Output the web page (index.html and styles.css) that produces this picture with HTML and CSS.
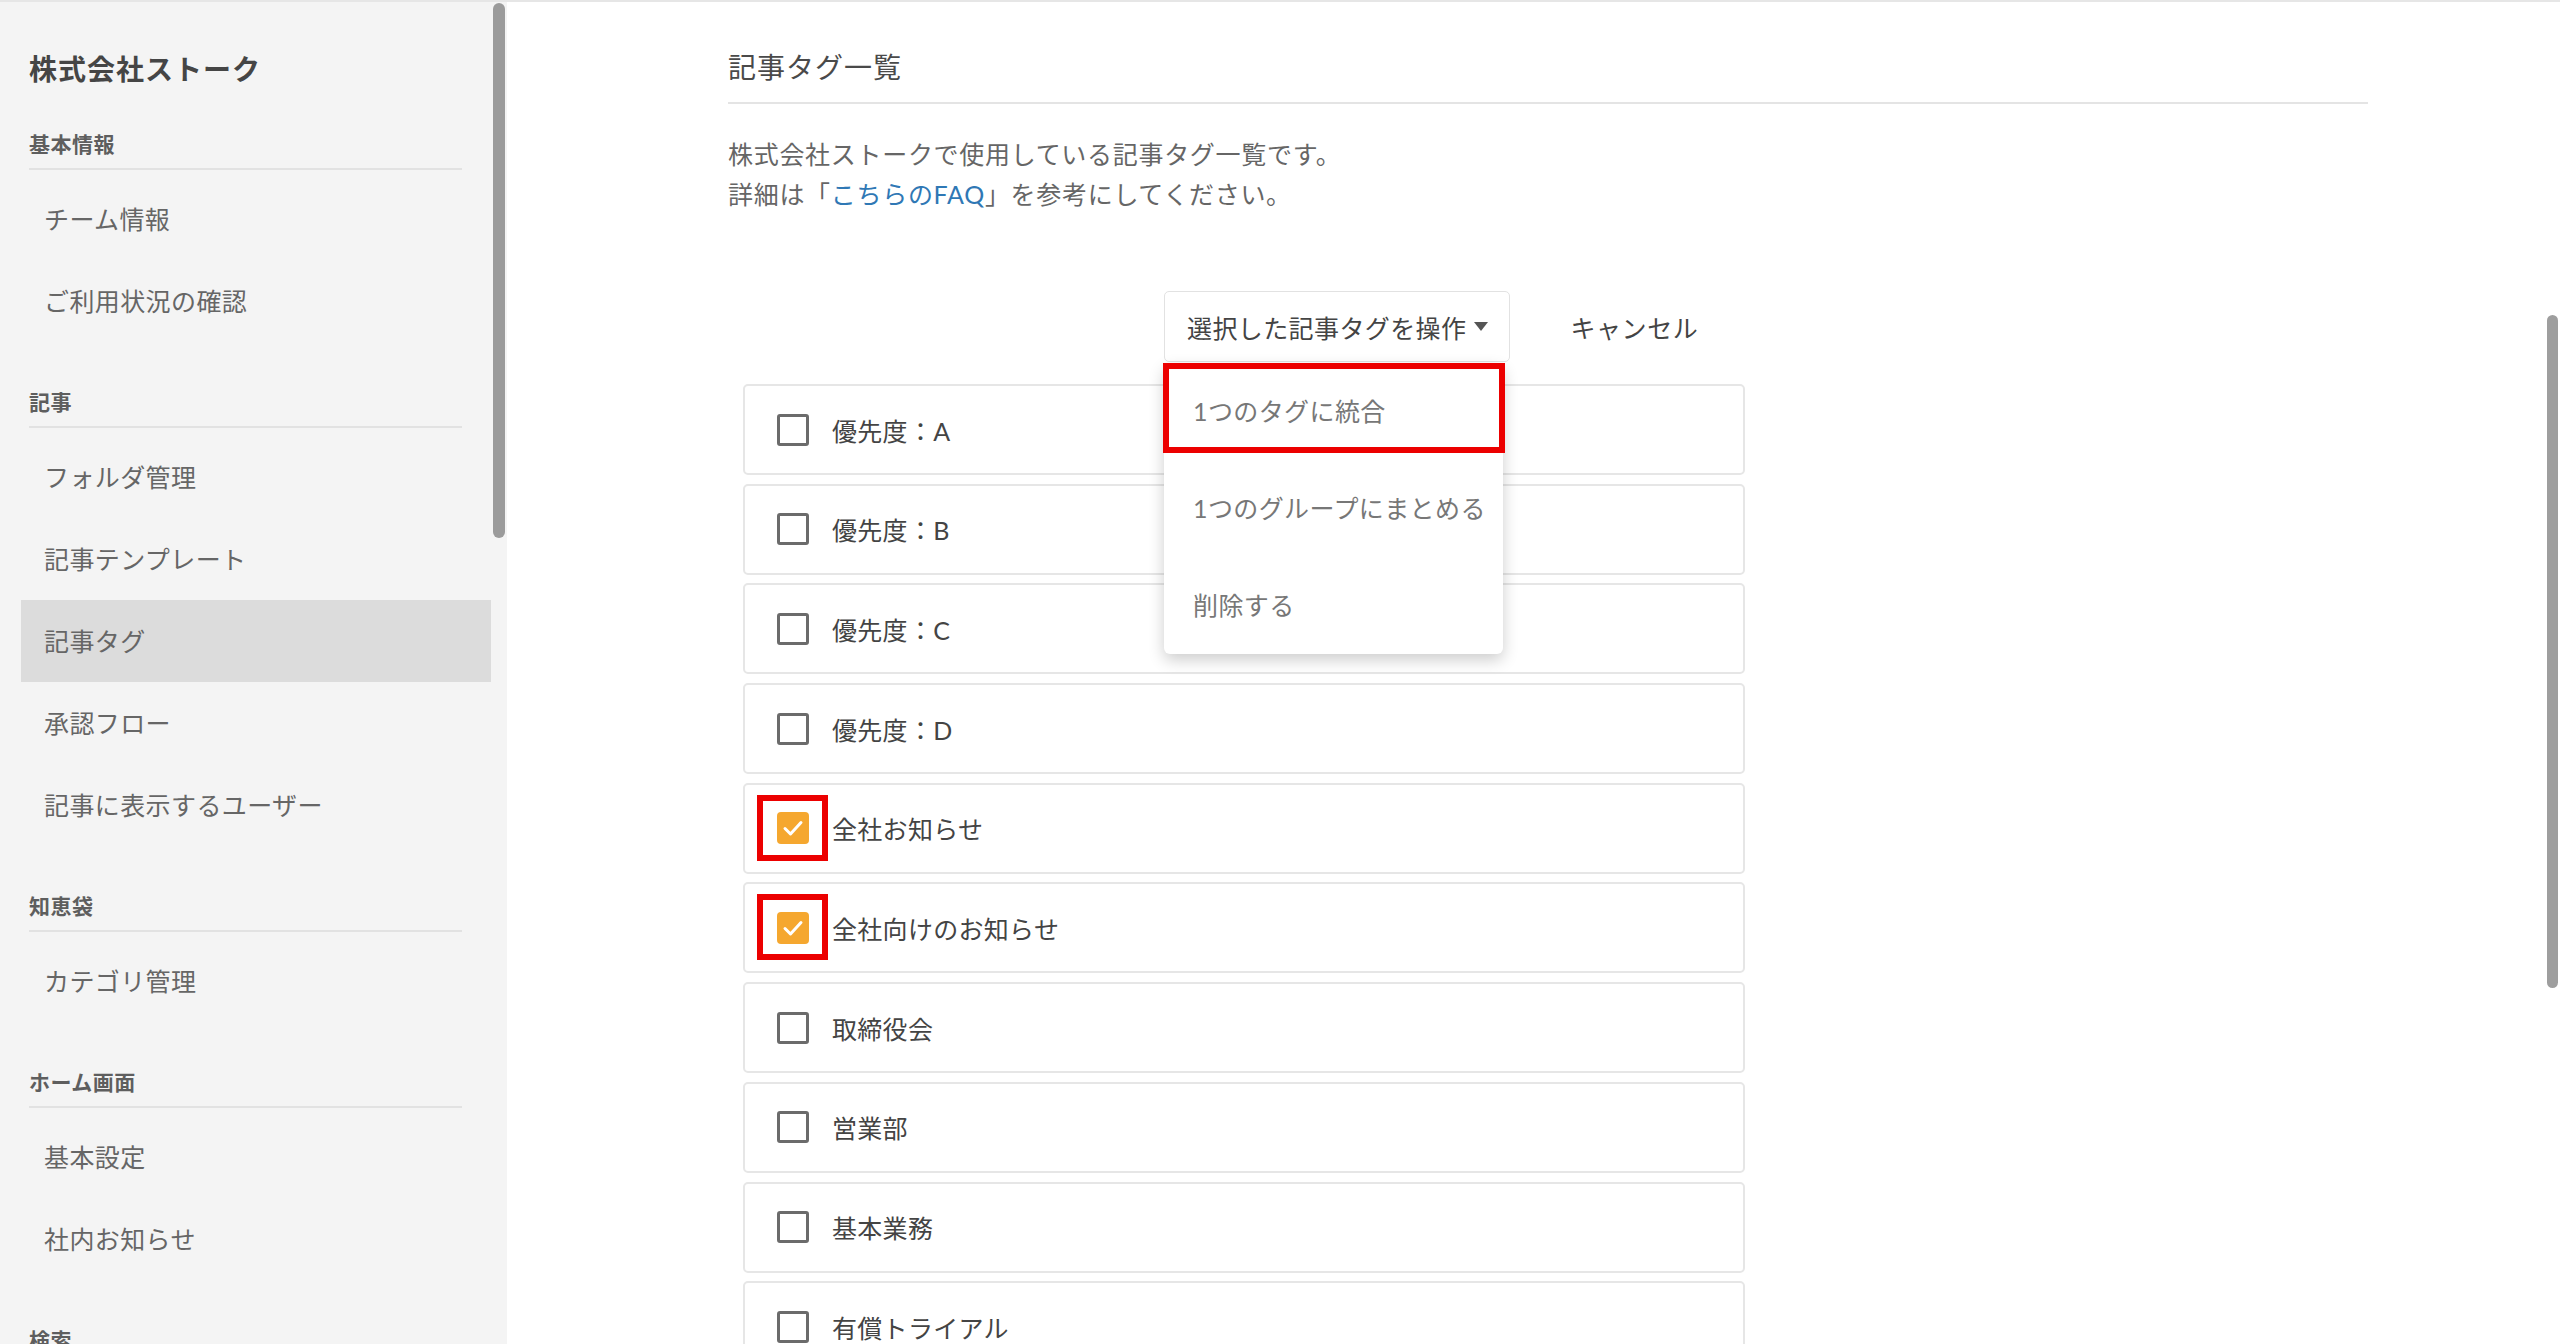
FILE: index.html
```html
<!DOCTYPE html>
<html lang="ja">
<head>
  <meta charset="UTF-8">
  <meta name="viewport" content="width=device-width, initial-scale=1.0">
  <title>記事タグ一覧</title>
  <link rel="stylesheet" href="styles.css">
</head>
<body>
  <div class="page">
    <aside class="sidebar">
      <div class="team-name">株式会社ストーク</div>

      <section class="nav-section">
        <h3 class="nav-heading">基本情報</h3>
        <a class="nav-item">チーム情報</a>
        <a class="nav-item">ご利用状況の確認</a>
      </section>

      <section class="nav-section">
        <h3 class="nav-heading">記事</h3>
        <a class="nav-item">フォルダ管理</a>
        <a class="nav-item">記事テンプレート</a>
        <a class="nav-item active">記事タグ</a>
        <a class="nav-item">承認フロー</a>
        <a class="nav-item">記事に表示するユーザー</a>
      </section>

      <section class="nav-section">
        <h3 class="nav-heading">知恵袋</h3>
        <a class="nav-item">カテゴリ管理</a>
      </section>

      <section class="nav-section">
        <h3 class="nav-heading">ホーム画面</h3>
        <a class="nav-item">基本設定</a>
        <a class="nav-item">社内お知らせ</a>
      </section>

      <section class="nav-section">
        <h3 class="nav-heading">検索</h3>
      </section>

      <div class="sidebar-thumb"></div>
    </aside>

    <main class="main">
      <div class="content">
        <h2 class="page-title">記事タグ一覧</h2>
        <p class="lead">
          株式会社ストークで使用している記事タグ一覧です。<br>
          詳細は「<a class="link" href="#">こちらのFAQ</a>」を参考にしてください。
        </p>

        <div class="toolbar">
          <div class="dropdown">
            <button class="btn-operate">選択した記事タグを操作<span class="caret"></span></button>
            <ul class="menu">
              <li class="menu-item">1つのタグに統合<span class="mark mark-menu"></span></li>
              <li class="menu-item">1つのグループにまとめる</li>
              <li class="menu-item">削除する</li>
            </ul>
          </div>
          <button class="btn-cancel">キャンセル</button>
        </div>

        <ul class="tag-list">
          <li class="tag-row"><span class="check"></span>優先度：A</li>
          <li class="tag-row"><span class="check"></span>優先度：B</li>
          <li class="tag-row"><span class="check"></span>優先度：C</li>
          <li class="tag-row"><span class="check"></span>優先度：D</li>
          <li class="tag-row">
            <span class="check checked">
              <svg viewBox="0 0 32 32" width="32" height="32"><polyline points="8,16.5 13.5,22 24,10.5" fill="none" stroke="#fff" stroke-width="3" stroke-linecap="round" stroke-linejoin="round"/></svg>
            </span>全社お知らせ
            <span class="mark mark-check"></span>
          </li>
          <li class="tag-row">
            <span class="check checked">
              <svg viewBox="0 0 32 32" width="32" height="32"><polyline points="8,16.5 13.5,22 24,10.5" fill="none" stroke="#fff" stroke-width="3" stroke-linecap="round" stroke-linejoin="round"/></svg>
            </span>全社向けのお知らせ
            <span class="mark mark-check"></span>
          </li>
          <li class="tag-row"><span class="check"></span>取締役会</li>
          <li class="tag-row"><span class="check"></span>営業部</li>
          <li class="tag-row"><span class="check"></span>基本業務</li>
          <li class="tag-row"><span class="check"></span>有償トライアル</li>
        </ul>
      </div>
    </main>

    <div class="page-thumb"></div>
  </div>
</body>
</html>
```

FILE: styles.css
```css
html, body {
  margin: 0;
  padding: 0;
  height: 100%;
  overflow: hidden;
}
body {
  font-family: 'Lato', 'Noto Sans CJK JP', sans-serif;
  background-color: #fff;
  color: #444;
}
.page {
  display: flex;
  height: 100vh;
  box-sizing: border-box;
  border-top: 2px solid #e6e6e6;
  overflow: hidden;
}

/* sidebar */
.sidebar {
  position: relative;
  flex: 0 0 507px;
  background-color: #f4f4f4;
  padding-top: 47px;
  box-sizing: border-box;
  overflow: hidden;
}
.team-name {
  margin: 0 0 40px 29px;
  font-size: 28px;
  line-height: 40px;
  font-weight: 700;
  letter-spacing: 1px;
  color: #454545;
}
.nav-section + .nav-section {
  margin-top: 45px;
}
.nav-heading {
  margin: 0 45px 8px 29px;
  padding-bottom: 9px;
  border-bottom: 2px solid #e2e2e2;
  font-size: 21px;
  line-height: 30px;
  font-weight: 700;
  letter-spacing: 0.5px;
  color: #5e5e5e;
}
.nav-item {
  display: block;
  height: 82px;
  line-height: 82px;
  margin: 0 16px 0 21px;
  padding-left: 23px;
  font-size: 25px;
  letter-spacing: 0.4px;
  color: #666;
  cursor: pointer;
}
.nav-item.active {
  background-color: #dcdcdc;
}
.sidebar-thumb {
  position: absolute;
  left: 493px;
  top: 1px;
  width: 12px;
  height: 535px;
  border-radius: 6px;
  background-color: #9b9b9b;
}

/* main */
.main {
  flex: 1;
  padding: 45px 0 0 221px;
}
.content {
  width: 1640px;
}
.page-title {
  margin: 0;
  padding-bottom: 15px;
  border-bottom: 2px solid #e4e4e4;
  font-size: 28px;
  line-height: 40px;
  font-weight: 400;
  letter-spacing: 1px;
  color: #4a4a4a;
}
.lead {
  margin: 30px 0 0;
  font-size: 25px;
  line-height: 40px;
  letter-spacing: 0.7px;
  color: #666;
}
.link {
  color: #2f78b5;
  text-decoration: none;
}

.toolbar {
  display: flex;
  align-items: center;
  margin-top: 77px;
  padding-left: 436px;
}
.dropdown {
  position: relative;
}
.btn-operate {
  display: flex;
  align-items: center;
  height: 71px;
  padding: 0 21px 0 22px;
  background-color: #fff;
  border: 1px solid #e2e2e2;
  border-radius: 5px;
  font-family: inherit;
  font-size: 25px;
  letter-spacing: 0.4px;
  color: #444;
  cursor: pointer;
}
.caret {
  width: 0;
  height: 0;
  margin-left: 8px;
  border-left: 7px solid transparent;
  border-right: 7px solid transparent;
  border-top: 9px solid #555;
}
.btn-cancel {
  margin-left: 60px;
  padding: 0;
  border: none;
  background: none;
  font-family: inherit;
  font-size: 25px;
  letter-spacing: 0.6px;
  color: #444;
  cursor: pointer;
}
.menu {
  position: absolute;
  top: calc(100% + 1px);
  left: 0;
  z-index: 5;
  width: 339px;
  margin: 0;
  padding: 0;
  list-style: none;
  background-color: #fff;
  border-radius: 6px;
  box-shadow: 0 6px 16px rgba(0, 0, 0, 0.2);
}
.menu-item {
  position: relative;
  height: 97px;
  line-height: 97px;
  padding-left: 29px;
  font-size: 25px;
  letter-spacing: 0.4px;
  color: #777;
}

.tag-list {
  width: 1002px;
  margin: 22px 0 0 15px;
  padding: 0;
  list-style: none;
}
.tag-row {
  position: relative;
  display: flex;
  align-items: center;
  height: 91px;
  box-sizing: border-box;
  margin-bottom: 8.7px;
  padding-left: 32px;
  border: 2px solid #e6e6e6;
  border-radius: 5px;
  font-size: 25px;
  letter-spacing: 0.3px;
  color: #444;
}
.check {
  flex: 0 0 32px;
  width: 32px;
  height: 32px;
  box-sizing: border-box;
  margin-right: 23px;
  border: 3px solid #6b6b6b;
  border-radius: 3px;
}
.check.checked {
  border: none;
  border-radius: 4px;
  background-color: #f5a72f;
}
.check svg {
  display: block;
}

/* red annotation boxes */
.mark {
  position: absolute;
  box-sizing: border-box;
  border: 6px solid #ec0000;
}
.mark-menu {
  top: 0;
  left: -1px;
  right: -2px;
  height: 90px;
}
.mark-check {
  left: 12px;
  top: 10px;
  width: 71px;
  height: 66px;
}

.page-thumb {
  position: fixed;
  right: 2px;
  top: 315px;
  width: 11px;
  height: 673px;
  border-radius: 6px;
  background-color: #9e9e9e;
}
```
